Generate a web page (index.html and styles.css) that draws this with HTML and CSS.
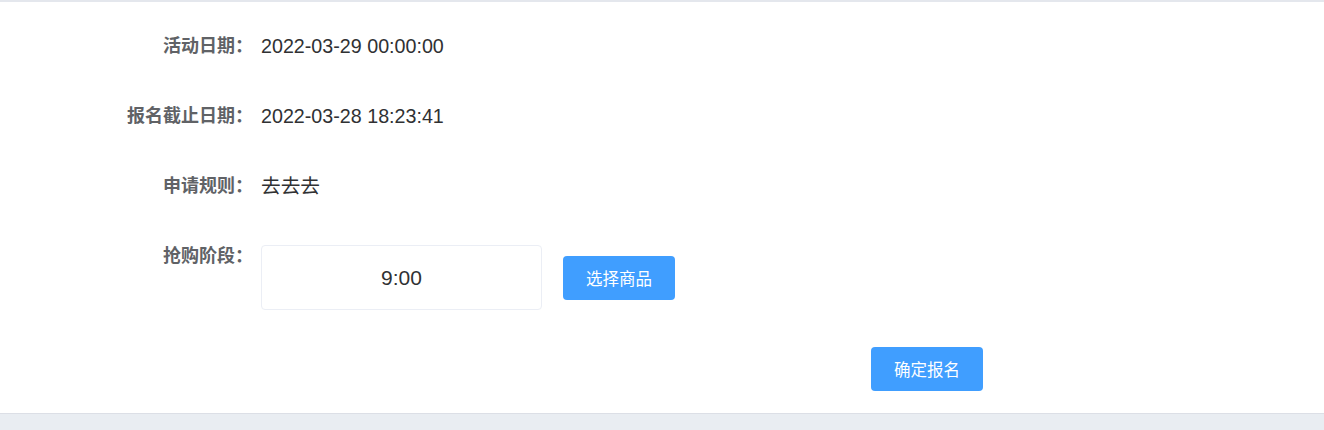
FILE: index.html
```html
<!DOCTYPE html>
<html lang="zh-CN">
<head>
    <meta charset="UTF-8">
    <meta name="viewport" content="width=device-width, initial-scale=1.0">
    <title>活动报名</title>
    <link rel="stylesheet" href="styles.css">
</head>
<body>
    <div class="card">
        <div class="form">
            <div class="form-item">
                <label class="form-label">活动日期：</label>
                <div class="form-value">2022-03-29 00:00:00</div>
            </div>
            <div class="form-item">
                <label class="form-label">报名截止日期：</label>
                <div class="form-value">2022-03-28 18:23:41</div>
            </div>
            <div class="form-item">
                <label class="form-label">申请规则：</label>
                <div class="form-value">去去去</div>
            </div>
            <div class="form-item stage-item">
                <label class="form-label">抢购阶段：</label>
                <div class="stage">
                    <div class="stage-box">9:00</div>
                    <button class="btn">选择商品</button>
                </div>
            </div>
            <div class="actions">
                <button class="btn">确定报名</button>
            </div>
        </div>
    </div>
</body>
</html>
```

FILE: styles.css
```css
body {
    margin: 0;
    background-color: #e9edf2;
    font-family: 'Liberation Sans', 'Noto Sans CJK SC', sans-serif;
    color: #303133;
}

.card {
    background: #fff;
    border-top: 2px solid #e4e7ed;
    border-bottom: 1px solid #dcdfe6;
    height: 414px;
    box-sizing: border-box;
}

.form {
    padding-top: 24px;
}

.form-item {
    display: flex;
    align-items: flex-start;
    margin-bottom: 30px;
}

.form-label {
    width: 261px;
    box-sizing: border-box;
    padding-right: 8px;
    text-align: right;
    font-size: 18px;
    font-weight: bold;
    color: #606266;
    line-height: 40px;
    flex-shrink: 0;
}

.form-value {
    font-size: 19.7px;
    line-height: 40px;
    color: #303133;
}

.stage {
    display: flex;
    align-items: center;
    gap: 21px;
    margin-top: 9px;
}

.stage-box {
    width: 279px;
    height: 63px;
    border: 1px solid #ebeef5;
    border-radius: 4px;
    display: flex;
    align-items: center;
    justify-content: center;
    font-size: 21px;
    color: #303133;
}

.btn {
    width: 112px;
    height: 44px;
    border: none;
    border-radius: 4px;
    background-color: #409eff;
    color: #fff;
    font-family: 'Liberation Sans', 'Noto Sans CJK SC', sans-serif;
    font-size: 16.5px;
    cursor: pointer;
}

.stage-item {
    margin-bottom: 37px;
}

.actions {
    padding-left: 871px;
}
```
